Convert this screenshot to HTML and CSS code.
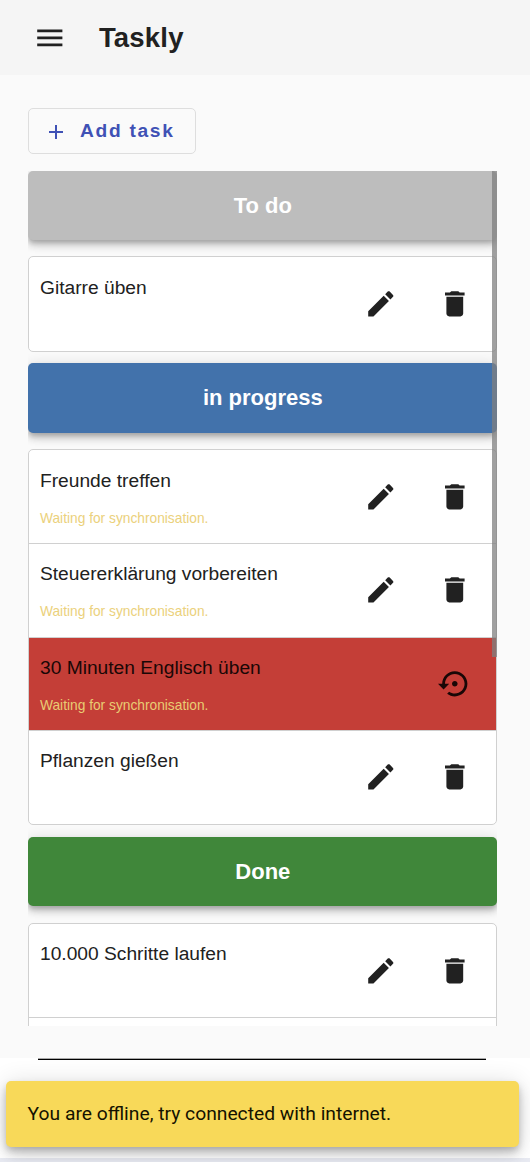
FILE: index.html
```html
<!DOCTYPE html>
<html lang="de">
<head>
<meta charset="utf-8">
<title>Taskly</title>
<link rel="stylesheet" href="styles.css">
</head>
<body>
<svg class="defs" aria-hidden="true">
  <symbol id="edit" viewBox="0 0 24 24"><path d="M3 17.25V21h3.75L17.81 9.94l-3.75-3.75L3 17.25zM20.71 7.04c.39-.39.39-1.02 0-1.41l-2.34-2.34c-.39-.39-1.02-.39-1.41 0l-1.83 1.83 3.75 3.75 1.83-1.83z"/></symbol>
  <symbol id="delete" viewBox="0 0 24 24"><path d="M6 19c0 1.1.9 2 2 2h8c1.1 0 2-.9 2-2V7H6v12zM19 4h-3.500l-1-1h-5l-1 1H5v2h14V4z"/></symbol>
  <symbol id="restore" viewBox="0 0 24 24"><path d="M14 12c0-1.100-.9-2-2-2s-2 .9-2 2 .9 2 2 2 2-.9 2-2zm-2-9c-4.970 0-9 4.030-9 9H0l4 4 4-4H5c0-3.870 3.130-7 7-7s7 3.130 7 7-3.130 7-7 7c-1.510 0-2.910-.49-4.060-1.300l-1.420 1.440C8.040 20.300 9.940 21 12 21c4.970 0 9-4.030 9-9s-4.030-9-9-9z"/></symbol>
</svg>
<header class="toolbar">
  <svg class="icon" viewBox="0 0 24 24"><path d="M3 18h18v-2H3v2zm0-5h18v-2H3v2zm0-7v2h18V6H3z"/></svg>
  <h1 class="title">Taskly</h1>
</header>
<main class="content">
  <button class="add"><svg class="plus" viewBox="0 0 24 24"><path d="M19 13h-6v6h-2v-6H5v-2h6V5h2v6h6v2z"/></svg><span>Add task</span></button>
  <div class="board">
    <div class="scroll">
      <h2 class="status todo">To do</h2>
      <ul class="card">
        <li class="task"><div class="text"><p class="name">Gitarre üben</p></div><svg class="icon"><use href="#edit"/></svg><svg class="icon"><use href="#delete"/></svg></li>
      </ul>
      <h2 class="status progress">in progress</h2>
      <ul class="card">
        <li class="task"><div class="text"><p class="name">Freunde treffen</p><p class="sync">Waiting for synchronisation.</p></div><svg class="icon"><use href="#edit"/></svg><svg class="icon"><use href="#delete"/></svg></li>
        <li class="task"><div class="text"><p class="name">Steuererklärung vorbereiten</p><p class="sync">Waiting for synchronisation.</p></div><svg class="icon"><use href="#edit"/></svg><svg class="icon"><use href="#delete"/></svg></li>
        <li class="task removed"><div class="text"><p class="name">30 Minuten Englisch üben</p><p class="sync">Waiting for synchronisation.</p></div><svg class="icon"><use href="#restore"/></svg></li>
        <li class="task"><div class="text"><p class="name">Pflanzen gießen</p></div><svg class="icon"><use href="#edit"/></svg><svg class="icon"><use href="#delete"/></svg></li>
      </ul>
      <h2 class="status done">Done</h2>
      <ul class="card">
        <li class="task"><div class="text"><p class="name">10.000 Schritte laufen</p></div><svg class="icon"><use href="#edit"/></svg><svg class="icon"><use href="#delete"/></svg></li>
        <li class="task"></li>
      </ul>
    </div>
    <div class="thumb"></div>
  </div>
</main>
<footer class="footer">
  <div class="rule"></div>
  <div class="snackbar">You are offline, try connected with internet.</div>
</footer>
</body>
</html>
```
FILE: styles.css
```css
* { box-sizing: border-box; }
body {
  margin: 0;
  height: 1162px;
  overflow: hidden;
  background: #fafafa;
  color: #212121;
  font-family: "Liberation Sans", Arial, sans-serif;
}
h1, h2, p, ul { margin: 0; padding: 0; }
ul { list-style: none; }
.defs { display: none; }
.icon { width: 33.6px; height: 33.6px; flex: none; fill: currentColor; }

.toolbar {
  display: flex;
  align-items: center;
  gap: 32.400px;
  height: 74.500px;
  padding: 0.500px 0 0 32.900px;
  background: #f5f5f5;
}
.title { font-size: 27.500px; line-height: 34px; letter-spacing: .2px; }

.content { height: 983.500px; padding: 33.900px 33px 0 27.700px; }
.add {
  display: flex;
  align-items: center;
  gap: 11.500px;
  width: 168.500px;
  height: 46px;
  padding: 0 0 0 15.800px;
  border: 1px solid #dedede;
  border-radius: 5px;
  background: #fafafa;
  color: #3f51b5;
  font: bold 19.200px/24px "Liberation Sans", Arial, sans-serif;
  letter-spacing: 1.700px;
}
.add span { padding-bottom: 1px; }
.plus { width: 24px; height: 24px; margin-top: 1px; fill: currentColor; }

.board { position: relative; height: 855.500px; margin-top: 16.200px; }
.scroll { height: 100%; overflow: hidden; }
.thumb {
  position: absolute;
  top: 0;
  right: 0;
  width: 5.500px;
  height: 486.500px;
  background: rgba(128, 128, 128, .75);
}
.status {
  height: 69.500px;
  border-radius: 5px;
  color: #fff;
  font-size: 22px;
  line-height: 69px;
  text-align: center;
  text-indent: 1px;
  box-shadow: 0 2.800px 5.600px -1.400px rgba(0, 0, 0, .2), 0 5.600px 7px rgba(0, 0, 0, .14), 0 1.400px 14px rgba(0, 0, 0, .12);
}
.todo { background: #bdbdbd; }
.progress { background: #4272ab; }
.done { background: #40873a; }
.card {
  position: relative;
  margin: 16.400px 0 11.500px;
  border: 1px solid #d0d0d0;
  border-radius: 5px;
  background: #fff;
  overflow: hidden;
}
.task {
  display: flex;
  gap: 40.400px;
  height: 93.500px;
  padding: 0 24.700px 0 11.300px;
}
.task:first-child:not(:last-child) { height: 93px; }
.task:last-child:not(:first-child) { height: 94px; }
.task + .task { border-top: 1px solid #d0d0d0; }
.task .icon { margin-top: 29.800px; }
.task + .task .icon { margin-top: 29px; }
.text { flex: 1; padding-top: 18.600px; }
.task + .task .text { padding-top: 18.100px; }
.name { font-size: 19.200px; line-height: 24px; }
.sync { margin-top: 17px; color: #ebd17c; font-size: 13.750px; line-height: 18px; }
.removed { background: #c43e37; color: #190706; }
.removed .sync { color: #e9cc73; }

.footer {
  height: 104px;
  padding: 0 10px 0 5.600px;
  background: #fff;
  border-bottom: 4px solid #e8eaf2;
}
.rule { width: 448px; height: 2px; margin-left: 32.500px; background: linear-gradient(#aaa 50%, #000 50%); }
.snackbar {
  display: flex;
  align-items: center;
  width: 513.700px;
  height: 66px;
  margin-top: 20.500px;
  padding: 0 0 0 22px;
  border-radius: 5px;
  background: #f8d959;
  color: #141200;
  font: 19.250px/24px Roboto, sans-serif;
  box-shadow: 0 4px 7px -1px rgba(0, 0, 0, .2), 0 8px 14px rgba(0, 0, 0, .14), 0 1px 25px rgba(0, 0, 0, .12);
}
```
